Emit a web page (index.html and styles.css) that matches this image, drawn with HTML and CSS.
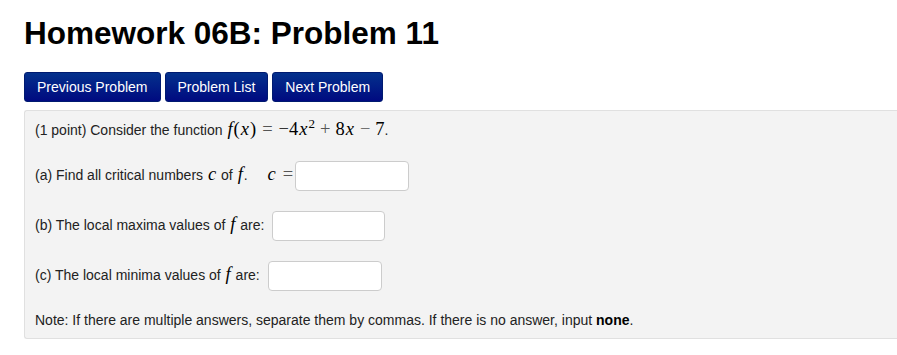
FILE: index.html
```html
<!DOCTYPE html>
<html lang="en">
<head>
    <meta charset="UTF-8">
    <title>Homework 06B: Problem 11</title>
    <link rel="stylesheet" href="styles.css">
</head>
<body>
    <h1 class="title">Homework 06B: Problem 11</h1>

    <div class="nav">
        <button type="button" class="nav-btn">Previous Problem</button>
        <button type="button" class="nav-btn">Problem List</button>
        <button type="button" class="nav-btn">Next Problem</button>
    </div>

    <div class="problem">
        <div class="row">(1 point) Consider the function <span class="math"><i>f</i>(<i>x</i>)<span class="op rel">=</span>&minus;4<i>x</i><sup>2</sup><span class="op">+</span>8<i>x</i><span class="op">&minus;</span>7</span>.</div>

        <div class="row row-input">(a) Find all critical numbers <span class="math"><i>c</i></span> of <span class="math"><i>f</i></span>. <span class="math eq"><i>c</i><span class="op rel">=</span></span><input type="text" class="answer answer-a"></div>

        <div class="row row-input">(b) The local maxima values of <span class="math"><i>f</i></span> are: <input type="text" class="answer answer-b"></div>

        <div class="row row-input">(c) The local minima values of <span class="math"><i>f</i></span> are: <input type="text" class="answer answer-c"></div>

        <div class="row">Note: If there are multiple answers, separate them by commas. If there is no answer, input <b>none</b>.</div>
    </div>
</body>
</html>
```

FILE: styles.css
```css
body {
    font-family: "Liberation Sans", Arial, sans-serif;
    margin: 0;
    padding: 0 0 0 24px;
    color: #222;
    background: #fff;
}
.title {
    margin: 0;
    padding-top: 15px;
    font-size: 31.5px;
    line-height: 36px;
    color: #000;
}
.nav {
    display: flex;
    gap: 4px;
    margin-top: 21px;
}
.nav-btn {
    height: 30px;
    padding: 0 12px;
    border: 1px solid #001a70;
    border-radius: 3px;
    background: linear-gradient(#04318c, #000a80);
    color: #fff;
    font-family: "Liberation Sans", Arial, sans-serif;
    font-size: 14px;
    cursor: pointer;
}
.problem {
    display: flex;
    flex-direction: column;
    gap: 20px;
    margin-top: 8px;
    padding: 9px 10px 8px;
    background: #f3f3f3;
    border: 1px solid #e0e0e0;
    border-right: none;
    border-radius: 3px 0 0 3px;
    font-size: 14px;
}
.row {
    height: 20px;
    line-height: 20px;
    white-space: nowrap;
}
.row-input {
    height: 30px;
    line-height: 30px;
}
.row b {
    color: #000;
}
.math {
    font-family: "Liberation Serif", "Times New Roman", serif;
    font-size: 18.5px;
    line-height: 0;
    color: #000;
}
.math i {
    padding: 0 1px;
}
.math sup {
    font-size: 13px;
    vertical-align: 7px;
    line-height: 0;
}
.op {
    margin: 0 5px;
    color: #555;
}
.op.rel {
    margin: 0 6px;
}
.eq {
    margin-left: 15px;
}
.eq .rel {
    margin-right: 2px;
}
.answer {
    box-sizing: border-box;
    width: 114px;
    height: 30px;
    margin-left: 4px;
    vertical-align: middle;
    padding: 4px 6px;
    background: #fff;
    border: 1px solid #ccc;
    border-radius: 4px;
    font-size: 14px;
}
.answer-a {
    margin-left: 0;
}
.answer-b {
    width: 113px;
}
```
